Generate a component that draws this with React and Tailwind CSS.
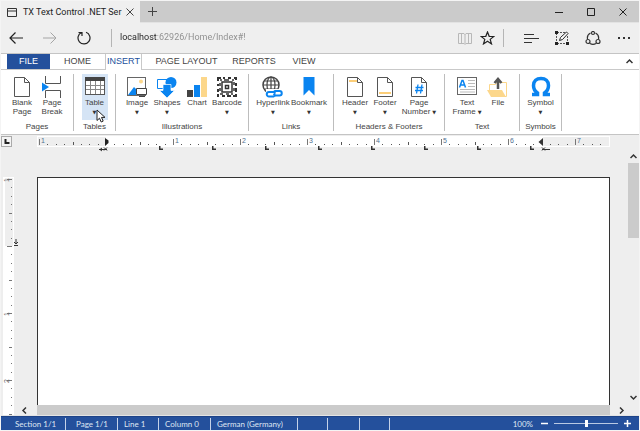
import { useState } from "react";

const DPI = 67;

const TABS = [
  { name: "HOME", cls: "w-[55px]" },
  { name: "INSERT", cls: "w-[37px]" },
  { name: "PAGE LAYOUT", cls: "ml-1.5 w-[77px]" },
  { name: "REPORTS", cls: "w-[58px]" },
  { name: "VIEW", cls: "w-[42px]" },
];

function PageOutline() {
  return (
    <>
      <path d="M3.5 1.5h10l5 5v14h-15z" fill="#fff" stroke="#555" />
      <path d="M13.5 1.5v5h5" fill="none" stroke="#555" />
    </>
  );
}

function Icon({ name }) {
  return (
    <svg width="22" height="22" viewBox="0 0 22 22" aria-hidden="true">
      {name === "blank" && <PageOutline />}
      {name === "break" && (
        <>
          <path d="M4.5 0v7.5h15V0M4.5 22v-7.5h15V22" fill="none" stroke="#555" />
          <path d="M1 6.5l7 4.5-7 4.5z" fill="#0a84f0" />
        </>
      )}
      {name === "table" && (
        <>
          <rect x="1.5" y="1.5" width="19" height="17" fill="#fff" stroke="#555" />
          <rect x="1" y="1" width="20" height="4" fill="#444" />
          <path d="M2 9.500h18M2 13.500h18M6.500 5v13M11.500 5v13M16.500 5v13" stroke="#888" />
        </>
      )}
      {name === "image" && (
        <>
          <rect x="1.500" y="1.500" width="18" height="18" fill="#fff" stroke="#666" />
          <circle cx="15" cy="5.500" r="2" fill="#fcd78b" />
          <path d="M2 19l6-8 2 2v6z" fill="#0a84f0" />
          <path d="M10.500 12.500h10v6h-10z" fill="#fff" stroke="#444" />
          <path d="M13 20.500h6" stroke="#444" />
        </>
      )}
      {name === "shapes" && (
        <>
          <path d="M1.500 3.500h11v9h-11z" fill="#fff" stroke="#0a84f0" />
          <circle cx="15" cy="6.500" r="5.500" fill="#0a84f0" />
          <path d="M7 8.500h8v6h3.500L11 22l-7.500-7.500H7z" fill="#0a84f0" stroke="#fff" strokeWidth=".7" />
        </>
      )}
      {name === "chart" && (
        <>
          <path d="M1 14h6v7H1z" fill="#444" />
          <path d="M8 9h6v12H8z" fill="#0a84f0" />
          <path d="M15 1h6v20h-6z" fill="#fcd78b" />
        </>
      )}
      {name === "barcode" && (
        <>
          <g fill="none" stroke="#333">
            <rect x="6" y="6" width="10" height="10" strokeWidth="1.500" />
            <rect x="9.500" y="9.500" width="3" height="3" strokeWidth="1.500" />
            <path d="M1 2h4M7 2h2M12 2h3M18 2h3M1 20h2M6 20h3M11 20h4M17 20h4" strokeWidth="2" />
            <path d="M2 1v4M2 8v2M2 13v3M2 18v3M20 1v3M20 7v3M20 12v4M20 18v3" strokeWidth="2" />
            <path d="M4 4h2M8 4h5M16 4h2M4 18h3M10 18h3M15 18h2M4 7v3M4 12v3M18 6v3M18 12v3" strokeWidth="1.500" />
          </g>
        </>
      )}
      {name === "hyperlink" && (
        <>
          <circle cx="9" cy="9" r="8" fill="#fff" stroke="#444" strokeWidth="1.500" />
          <path d="M1 9h16M9 1v16M2.500 5h13M2.500 13h13" stroke="#444" strokeWidth="1.200" />
          <ellipse cx="9" cy="9" rx="4" ry="8" fill="none" stroke="#444" strokeWidth="1.200" />
          <path d="M4 13h17v9H4z" fill="#fff" />
          <g fill="none" stroke="#0a84f0" strokeWidth="2">
            <path d="M13 19.500l-1.500 1H7a2 2 0 010-4.500h4.500l2 1.500" />
            <path d="M11.500 18l2 1.500h4a2.200 2.200 0 000-4.500H13l-1.500 1" />
          </g>
        </>
      )}
      {name === "bookmark" && <path d="M5.500 1h11v18.500L11 14l-5.500 5.500z" fill="#0a84f0" />}
      {name === "header" && (
        <>
          <PageOutline />
          <path d="M5 4h8v2H5z" fill="#fcce78" />
        </>
      )}
      {name === "footer" && (
        <>
          <PageOutline />
          <path d="M5 16h12v2H5z" fill="#fcce78" />
        </>
      )}
      {name === "number" && (
        <>
          <PageOutline />
          <path d="M10 8.500l-1.500 9M14 8.500l-1.500 9M7.500 11.500h8M7 14.500h8" stroke="#0a84f0" strokeWidth="1.300" />
        </>
      )}
      {name === "frame" && (
        <>
          <rect x="1.500" y="1.500" width="19" height="17" fill="#fff" stroke="#666" />
          <path d="M3.500 11.500l2.500-7h1l2.500 7M4.500 9h4" fill="none" stroke="#0a84f0" strokeWidth="1.500" />
          <path d="M12 4.500h7M12 7.500h7M12 10.500h7M4 13.500h15M4 16h15" stroke="#bbb" />
        </>
      )}
      {name === "file" && (
        <>
          <path d="M2.500 14V8.500h6l1.500-2h9.500v14H4" fill="#fff" stroke="#fcd78b" />
          <path d="M0 14h15l4 7H4z" fill="#fcd78b" />
          <path d="M11 13V4M7.500 7L11 3l3.500 4" fill="none" stroke="#555" strokeWidth="2.500" />
        </>
      )}
      {name === "symbol" && (
        <path
          d="M2 18.500h5.500v-1.500C4.500 15 3.500 12.500 3.500 9.500 3.500 5 6.500 2.500 11 2.500s7.500 2.500 7.500 7c0 3-1 5.500-4 7.500v1.500H20"
          fill="none"
          stroke="#0a84f0"
          strokeWidth="3.500"
        />
      )}
    </svg>
  );
}

function Tool({ icon, lines, arrow, inline, width = "w-[30px]", active, children }) {
  return (
    <button
      className={`relative flex h-[46px] shrink-0 flex-col items-center pt-0.5 leading-[9px] whitespace-nowrap ${width} ${
        active ? "bg-[#d5e4f5]" : ""
      }`}
    >
      <Icon name={icon} />
      <span>{lines[0]}</span>
      <span>
        {lines[1]}
        {arrow && (
          <span className={`font-['DejaVu_Sans'] text-[5px] text-[#333] ${inline ? "ml-0.5" : ""}`}>▼</span>
        )}
      </span>
      {children}
    </button>
  );
}

function Group({ label, children }) {
  return (
    <section className="flex min-w-[42px] shrink-0 flex-col items-center justify-between border-r border-[#bdbdbd] px-1.5">
      <div className="flex">{children}</div>
      <h2 className="-mx-1 leading-[9px] whitespace-nowrap">{label}</h2>
    </section>
  );
}

function Pointer() {
  return (
    <svg className="absolute top-[35px] left-[14px]" width="10" height="14" viewBox="0 0 10 14" aria-hidden="true">
      <path d="M1 1v10.500l2.500-2.300 1.700 3.800 2-.9-1.700-3.700H9z" fill="#fff" stroke="#222" />
    </svg>
  );
}

function HorizontalRuler() {
  const ticks = [];
  for (let i = -8; i <= 59; i++) {
    const x = Math.round(69 + (i * DPI) / 8);
    if (i % 8 !== 0) ticks.push({ x, h: i % 4 === 0 ? 3 : 1 });
  }
  const inches = [-1, 1, 2, 3, 4, 5, 6, 7];
  return (
    <svg width="573" height="16" aria-hidden="true">
      <rect width="573" height="11" fill="#fff" />
      <rect x="1" y="1" width="68" height="9" fill="#eee" />
      <rect x="506" y="1" width="66" height="9" fill="#eee" />
      {ticks.map((t) => (
        <rect key={t.x} x={t.x} y={9 - t.h} width="1" height={t.h} fill="#555" />
      ))}
      {inches.map((n) => (
        <g key={n}>
          <rect x={69 + n * DPI} y="3" width="1" height="6" fill="#777" />
          <text x={71 + n * DPI} y="7" fontSize="7" fill="#4f7191">
            {Math.abs(n)}
          </text>
        </g>
      ))}
      {[122, 175, 228, 281, 334, 387, 440, 493].map((x) => (
        <path key={x} d={`M${x} 10h1.500v2.500h2.500V14h-4z`} fill="#333" />
      ))}
      <path d="M68 2v8l3.500-3V4.500z" fill="#222" />
      <path d="M62 13.500h8M65 12l-2 1.500 2 1.500M67 11.500l3 3M70 11.500l-3 3" fill="none" stroke="#333" />
      <path d="M506 2v8l-4.500-4z" fill="#333" />
      <path d="M505 13.500h8M505 11.500l3 3M508 11.500l-3 3" fill="none" stroke="#333" />
    </svg>
  );
}

function VerticalRuler() {
  const ticks = [];
  for (let i = -8; i <= 64; i++) {
    const y = Math.round(69 + (i * DPI) / 8);
    ticks.push({ y, w: i % 8 === 0 ? 5 : i % 4 === 0 ? 3 : 1 });
  }
  return (
    <div className="relative mt-[26px] w-[18px] shrink-0 overflow-hidden">
      <svg className="absolute inset-0" width="18" height="600" aria-hidden="true">
        <rect x="2" width="11" height="600" fill="#fff" />
        <rect x="4" y="1" width="8" height="68" fill="#eee" />
        {ticks.map((t) => (
          <rect key={t.y} x={11 - t.w} y={t.y} width={t.w} height="1" fill="#777" />
        ))}
        {[-1, 1, 2].map((n) => (
          <text
            key={n}
            x="0"
            y="0"
            fontSize="7"
            fill="#666"
            transform={`translate(8 ${72 + n * DPI}) rotate(-90)`}
          >
            {Math.abs(n)}
          </text>
        ))}
        <path d="M15 62v5M13 65l2 2 2-2M13 68.500h4" fill="none" stroke="#333" />
      </svg>
    </div>
  );
}

function Chevron({ d }) {
  return (
    <svg width="7" height="7" viewBox="0 0 7 7" aria-hidden="true">
      <path d={d} fill="none" stroke="#333" strokeWidth="1.500" />
    </svg>
  );
}

function BrowserChrome() {
  return (
    <>
      <div className="flex h-[22px] items-stretch border-b border-[#e3e3e3] bg-[#cbcbcb]">
        <div className="-mb-px flex w-[139px] items-center bg-[#efefef] pl-1.5">
          <svg width="10" height="9" viewBox="0 0 10 9" aria-hidden="true">
            <path d="M.5.500h9v8h-9zM.5 3h9" fill="none" stroke="#333" />
          </svg>
          <span className="ml-1.5 flex-1 font-['Roboto'] text-[9px] leading-[14px] whitespace-nowrap text-[#222]">
            TX Text Control .NET Ser
          </span>
          <button aria-label="Close tab" className="mr-1.5">
            <svg width="8" height="8" viewBox="0 0 8 8">
              <path d="M.5.500l7 7M7.500.500l-7 7" stroke="#444" />
            </svg>
          </button>
        </div>
        <button aria-label="New tab" className="ml-2 flex items-center">
          <svg width="9" height="9" viewBox="0 0 9 9">
            <path d="M4.500 0v9M0 4.500h9" stroke="#444" />
          </svg>
        </button>
        <div className="ml-auto flex items-center gap-6 pr-3">
          <button aria-label="Minimize">
            <svg width="8" height="8" viewBox="0 0 8 8">
              <path d="M0 4.500h8" stroke="#222" />
            </svg>
          </button>
          <button aria-label="Maximize">
            <svg width="8" height="8" viewBox="0 0 8 8">
              <path d="M.5.500h7v7h-7z" fill="none" stroke="#222" />
            </svg>
          </button>
          <button aria-label="Close window">
            <svg width="8" height="8" viewBox="0 0 8 8">
              <path d="M.5.500l7 7M7.500.500l-7 7" stroke="#222" />
            </svg>
          </button>
        </div>
      </div>
      <div className="flex h-[31px] items-center border-b border-[#c4c4c4] bg-[#efefef] pl-2">
        <button aria-label="Back">
          <svg width="14" height="12" viewBox="0 0 14 12">
            <path d="M14 6H1M6.500.500L1 6l5.500 5.500" fill="none" stroke="#222" strokeWidth="1.200" />
          </svg>
        </button>
        <button aria-label="Forward" className="ml-5">
          <svg width="14" height="12" viewBox="0 0 14 12">
            <path d="M0 6h13M7.500.500L13 6l-5.500 5.500" fill="none" stroke="#a5a5a5" />
          </svg>
        </button>
        <button aria-label="Refresh" className="ml-5">
          <svg width="14" height="14" viewBox="0 0 14 14">
            <path d="M9 1.300A6 6 0 114.500 1.500M1.500 1.500h3.500V5" fill="none" stroke="#222" strokeWidth="1.200" />
          </svg>
        </button>
        <div className="ml-5 h-[18px] w-px bg-[#b5b5b5]" />
        <input
          aria-label="Address"
          defaultValue="localhost:62926/Home/Index#!"
          className="ml-2 min-w-0 flex-1 bg-[linear-gradient(90deg,#222_0_37px,#8c8c8c_37px)] bg-clip-text font-['Roboto'] text-[9px] text-transparent outline-none"
        />
        <div className="flex items-center pr-2">
          <button aria-label="Reading view">
            <svg width="14" height="13" viewBox="0 0 14 13">
              <path d="M.5 1.500h5.500l1 1 1-1h5.500v10H8l-1 1-1-1H.500zM3.500 1.500v10M7 2v10M10.500 1.500v10" fill="none" stroke="#b8b8b8" />
            </svg>
          </button>
          <button aria-label="Favorites" className="ml-2">
            <svg width="15" height="14" viewBox="0 0 15 14">
              <path d="M7.500 1l1.700 4.300 4.600.2-3.600 2.900 1.300 4.500-4-2.600-4 2.600 1.300-4.500L1.200 5.500l4.600-.2z" fill="none" stroke="#222" strokeWidth="1.200" />
            </svg>
          </button>
          <div className="ml-2 h-[18px] w-px bg-[#b5b5b5]" />
          <button aria-label="Hub" className="ml-5">
            <svg width="15" height="10" viewBox="0 0 15 10">
              <path d="M0 1.500h10M0 5.500h15M0 9.500h8" stroke="#333" />
            </svg>
          </button>
          <button aria-label="Web note" className="ml-4">
            <svg width="14" height="14" viewBox="0 0 14 14">
              <path d="M2 1.500h8M1.500 2v10M2 12.500h10M12.500 5v7" stroke="#555" strokeDasharray="2 1" />
              <path d="M0 0h3v3H0zM0 11h3v3H0zM11 11h3v3h-3z" fill="#222" />
              <path d="M4.500 9.500l1-3L11.500 1 13 2.500 7.500 8.500z" fill="#fff" stroke="#222" />
            </svg>
          </button>
          <button aria-label="Share" className="ml-4">
            <svg width="16" height="14" viewBox="0 0 16 14">
              <path d="M5.500 2A5.500 5.500 0 002.500 8M10.500 2a5.500 5.500 0 013 6M5 12.500a6 6 0 006 0" fill="none" stroke="#333" strokeWidth="1.200" />
              <g fill="none" stroke="#333" strokeWidth="1.200">
                <circle cx="8" cy="2" r="1.500" />
                <circle cx="3" cy="10.500" r="2" />
                <circle cx="13" cy="10.500" r="2" />
              </g>
            </svg>
          </button>
          <button aria-label="More" className="ml-4">
            <svg width="14" height="4" viewBox="0 0 14 4">
              <path d="M1 1h2v2H1zM6 1h2v2H6zM11 1h2v2h-2z" fill="#333" />
            </svg>
          </button>
        </div>
      </div>
    </>
  );
}

function Ribbon() {
  const [tab, setTab] = useState("INSERT");
  return (
    <>
      <nav className="flex h-4 items-stretch border-b border-[#c9c9c9] bg-white pl-1.5 text-[9px] text-[#444]">
        <button className="w-[43px] bg-[#24509c] text-white">FILE</button>
        {TABS.map((t) => (
          <button
            key={t.name}
            onClick={() => setTab(t.name)}
            className={`whitespace-nowrap ${t.cls} ${
              tab === t.name ? "-mb-px border-x border-[#c9c9c9] bg-white text-[#24509c]" : ""
            }`}
          >
            {t.name}
          </button>
        ))}
        <button aria-label="Collapse ribbon" className="mr-1.5 ml-auto">
          <Chevron d="M.5 5l3-3 3 3" />
        </button>
      </nav>
      <div className="border-b border-[#c4c4c4] bg-white pt-1 pb-[3px] text-[8px] text-[#444]">
        <div className="flex h-[57px] overflow-hidden">
          <Group label="Pages">
            <Tool icon="blank" lines={["Blank", "Page"]} />
            <Tool icon="break" lines={["Page", "Break"]} />
          </Group>
          <Group label="Tables">
            <Tool icon="table" lines={["Table"]} arrow active width="w-[26px]">
              <Pointer />
            </Tool>
          </Group>
          <Group label="Illustrations">
            <Tool icon="image" lines={["Image"]} arrow />
            <Tool icon="shapes" lines={["Shapes"]} arrow />
            <Tool icon="chart" lines={["Chart"]} />
            <Tool icon="barcode" lines={["Barcode"]} arrow />
          </Group>
          <Group label="Links">
            <Tool icon="hyperlink" lines={["Hyperlink"]} arrow width="w-9" />
            <Tool icon="bookmark" lines={["Bookmark"]} arrow width="w-9" />
          </Group>
          <Group label="Headers & Footers">
            <Tool icon="header" lines={["Header"]} arrow />
            <Tool icon="footer" lines={["Footer"]} arrow />
            <Tool icon="number" lines={["Page", "Number"]} arrow inline width="w-[38px]" />
          </Group>
          <Group label="Text">
            <Tool icon="frame" lines={["Text", "Frame"]} arrow inline width="w-8" />
            <Tool icon="file" lines={["File"]} />
          </Group>
          <Group label="Symbols">
            <Tool icon="symbol" lines={["Symbol"]} arrow width="w-[26px]" />
          </Group>
        </div>
      </div>
    </>
  );
}

function StatusBar() {
  const [zoom, setZoom] = useState(100);
  return (
    <footer className="flex h-3.5 items-center border-t border-[#1d4388] bg-[#24509c] font-['Lato'] text-[8px] whitespace-nowrap text-[#dfe7f3]">
      <div className="flex h-3 flex-1 items-center leading-3">
        <span className="w-[65px] border-r border-[#c5d2e8] pl-3.5">Section 1/1</span>
        <span className="w-[52px] border-r border-[#c5d2e8] pl-2.5">Page 1/1</span>
        <span className="w-[41px] border-r border-[#c5d2e8] pl-1.5">Line 1</span>
        <span className="w-[52px] border-r border-[#c5d2e8] pl-1.5">Column 0</span>
        <span className="w-[87px] border-r border-[#c5d2e8] pl-1.5">German (Germany)</span>
        <span className="h-3 w-[30px] border-r border-[#c5d2e8]" />
        <span className="h-3 w-8 border-r border-[#c5d2e8]" />
        <span className="h-3 w-[30px] border-r border-[#c5d2e8]" />
      </div>
      <label htmlFor="zoom">{zoom}%</label>
      <button aria-label="Zoom out" className="ml-2" onClick={() => setZoom(Math.max(10, zoom - 10))}>
        <svg width="7" height="7" viewBox="0 0 7 7">
          <path d="M0 3.500h7" stroke="#fff" strokeWidth="1.500" />
        </svg>
      </button>
      <input
        id="zoom"
        type="range"
        min="0"
        max="200"
        value={zoom}
        onChange={(e) => setZoom(Number(e.target.value))}
        className="mx-1.5 h-2 w-16 appearance-none bg-[linear-gradient(#b9c9e3,#b9c9e3)] bg-[length:100%_1px] bg-center bg-no-repeat [&::-webkit-slider-thumb]:h-[7px] [&::-webkit-slider-thumb]:w-[3px] [&::-webkit-slider-thumb]:appearance-none [&::-webkit-slider-thumb]:bg-white"
      />
      <button aria-label="Zoom in" className="mr-2" onClick={() => setZoom(Math.min(200, zoom + 10))}>
        <svg width="7" height="7" viewBox="0 0 7 7">
          <path d="M0 3.500h7M3.500 0v7" stroke="#fff" strokeWidth="1.500" />
        </svg>
      </button>
    </footer>
  );
}

export default function App() {
  return (
    <div className="flex h-screen flex-col overflow-hidden border border-[#f4f4f4] bg-[#eee] font-['Liberation_Sans',sans-serif]">
      <BrowserChrome />
      <Ribbon />
      <main className="flex min-h-0 flex-1 flex-col border-b border-[#e4e4e4]">
        <div className="flex h-4 items-start pt-px">
          <button aria-label="Tab type" className="mr-[25px] h-[11px] w-[11px] border border-[#aaa] bg-[#f4f4f4]">
            <svg width="9" height="9" viewBox="0 0 9 9">
              <path d="M3.500 2v4h4" fill="none" stroke="#222" strokeWidth="2" />
            </svg>
          </button>
          <HorizontalRuler />
        </div>
        <div className="flex min-h-0 flex-1">
          <VerticalRuler />
          <div className="flex w-[18px] shrink-0 flex-col justify-end pb-px">
            <button aria-label="Scroll left" className="ml-[2px]">
              <Chevron d="M5 .5l-3 3 3 3" />
            </button>
          </div>
          <div className="flex min-w-0 flex-1 flex-col pt-[26px]">
            <div className="flex-1 border-x border-t border-[#333] bg-white" />
            <div className="h-2.5 bg-[#cbcbcb]" />
          </div>
          <div className="flex w-[17px] flex-col justify-end pb-px pl-2">
            <button aria-label="Scroll right">
              <Chevron d="M2 .5l3 3-3 3" />
            </button>
          </div>
          <div className="flex w-[12px] flex-col items-center pt-0.5 pb-3.5">
            <button aria-label="Scroll up">
              <Chevron d="M.5 5l3-3 3 3" />
            </button>
            <div className="mt-[3px] h-[75px] w-[11px] bg-[#cbcbcb]" />
            <button aria-label="Scroll down" className="mt-auto">
              <Chevron d="M.5 2l3 3 3-3" />
            </button>
          </div>
        </div>
      </main>
      <StatusBar />
    </div>
  );
}
